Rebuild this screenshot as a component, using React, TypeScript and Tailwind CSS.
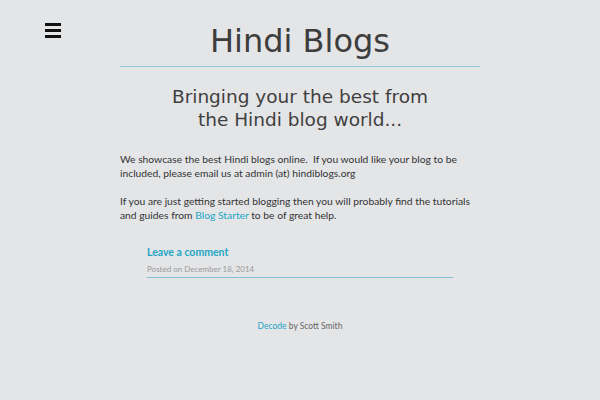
import React from "react";

const App = () => {
  return (
    <div className="relative min-h-[400px] w-full bg-[#e4e5e7] font-['DejaVu_Sans',sans-serif] text-[#3a3a3a]">
      {/* menu toggle */}
      <button className="absolute left-[45px] top-[23px] flex w-[16px] flex-col gap-[3px]">
        <span className="h-[3px] w-full bg-[#111]" />
        <span className="h-[3px] w-full bg-[#111]" />
        <span className="h-[3px] w-full bg-[#111]" />
      </button>

      <div className="mx-auto w-[360px] pt-[22px]">
        <header className="border-b border-[#8fcbd9] pb-[6px] text-center">
          <h1 className="text-[32px] leading-[38px] font-normal text-[#3d3d3d]">
            Hindi Blogs
          </h1>
        </header>

        <h2 className="mt-[18px] text-center text-[18.5px] leading-[23px] text-[#404040]">
          Bringing your the best from
          <br />
          the Hindi blog world...
        </h2>

        <div className="mt-[21px] font-['Lato',sans-serif] text-[10.3px] leading-[14px] text-[#333]">
          <p>
            We showcase the best Hindi blogs online.&nbsp; If you would like your blog to be
            included, please email us at admin (at) hindiblogs.org
          </p>
          <p className="mt-[14px]">
            If you are just getting started blogging then you will probably find the tutorials
            and guides from <a className="text-[#23a6c6]">Blog Starter</a> to be of great help.
          </p>
        </div>
      </div>

      <div className="mx-auto mt-[23px] w-[306px] border-b border-[#7fc3d5] pb-[2px] font-['Lato',sans-serif]">
        <a className="block text-[10.5px] leading-[14px] font-bold text-[#23a6c6]">
          Leave a comment
        </a>
        <p className="mt-[4px] text-[8px] leading-[12px] text-[#9a9a9a]">
          Posted on December 18, 2014
        </p>
      </div>

      <footer className="mt-[42px] text-center font-['Lato',sans-serif] text-[8.5px] leading-[12px] text-[#666]">
        <a className="text-[#23a6c6]">Decode</a> by Scott Smith
      </footer>
    </div>
  );
};

export default App;
